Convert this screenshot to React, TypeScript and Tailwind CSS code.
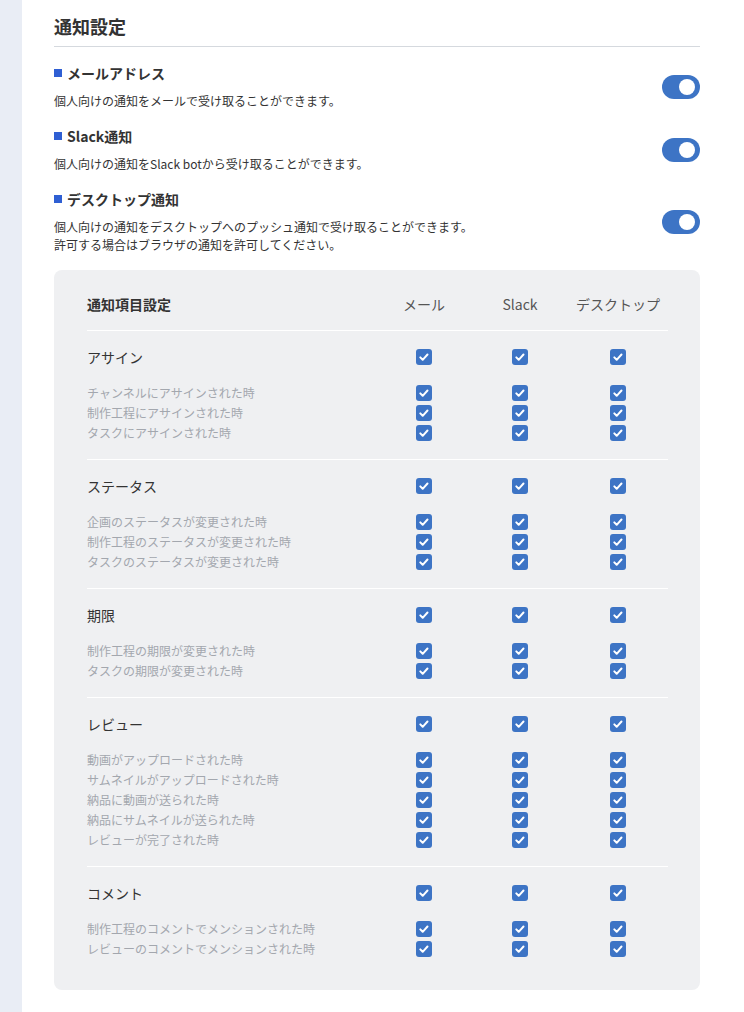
import React from "react";

function Check() {
  return (
    <span className="flex h-4 w-4 items-center justify-center rounded-[3px] bg-[#3d74c5]">
      <svg viewBox="0 0 16 16" className="h-4 w-4" fill="none">
        <path d="M4.3 8.4l2.4 2.4 4.8-5.3" stroke="white" strokeWidth="2" strokeLinecap="round" strokeLinejoin="round" />
      </svg>
    </span>
  );
}

function Toggle() {
  return (
    <div className="flex h-6 w-[38px] shrink-0 items-center justify-end rounded-full bg-[#3d74c5] pr-[5px]">
      <div className="h-4 w-4 rounded-full bg-white" />
    </div>
  );
}

const sections = [
  { title: "メールアドレス", desc: ["個人向けの通知をメールで受け取ることができます。"] },
  { title: "Slack通知", desc: ["個人向けの通知をSlack botから受け取ることができます。"] },
  {
    title: "デスクトップ通知",
    desc: [
      "個人向けの通知をデスクトップへのプッシュ通知で受け取ることができます。",
      "許可する場合はブラウザの通知を許可してください。",
    ],
  },
];

const groups = [
  { name: "アサイン", items: ["チャンネルにアサインされた時", "制作工程にアサインされた時", "タスクにアサインされた時"] },
  { name: "ステータス", items: ["企画のステータスが変更された時", "制作工程のステータスが変更された時", "タスクのステータスが変更された時"] },
  { name: "期限", items: ["制作工程の期限が変更された時", "タスクの期限が変更された時"] },
  {
    name: "レビュー",
    items: [
      "動画がアップロードされた時",
      "サムネイルがアップロードされた時",
      "納品に動画が送られた時",
      "納品にサムネイルが送られた時",
      "レビューが完了された時",
    ],
  },
  { name: "コメント", items: ["制作工程のコメントでメンションされた時", "レビューのコメントでメンションされた時"] },
];

function Checks() {
  return (
    <>
      <div className="flex justify-center"><Check /></div>
      <div className="flex justify-center"><Check /></div>
      <div className="flex justify-center"><Check /></div>
    </>
  );
}

export default function App() {
  return (
    <div className="flex min-h-screen font-['Noto_Sans_CJK_JP','Noto_Sans',sans-serif] text-[#333]">
      <div className="w-[22px] shrink-0 bg-[#e9edf5]" />
      <div className="flex-1 bg-white pl-[32px] pr-[44px] pt-[14px]">
        <h2 className="border-b border-[#d5d9de] pb-[8px] text-[18px] font-bold leading-[24px] text-[#333]">通知設定</h2>
        <div className="mt-[16px] flex flex-col gap-[16px]">
          {sections.map((s) => (
            <div key={s.title} className="flex items-center justify-between">
              <div>
                <div className="flex items-center gap-[5px] text-[14px] font-bold leading-[20px] text-[#333]">
                  <span className="h-2 w-2 bg-[#2f5fd3]" />
                  {s.title}
                </div>
                <div className="mt-[9px] text-[12px] leading-[18px] text-[#333]">
                  {s.desc.map((d) => (
                    <div key={d}>{d}</div>
                  ))}
                </div>
              </div>
              <Toggle />
            </div>
          ))}
        </div>
        <div className="mt-4 rounded-lg bg-[#eff0f2] pb-[15px] pl-[33px] pr-[32px] pt-[22px]">
          <div className="grid h-6 grid-cols-[1fr_96px_96px_100px] items-center">
            <div className="text-[14px] font-bold text-[#333]">通知項目設定</div>
            <div className="text-center text-[14px] text-[#555]">メール</div>
            <div className="text-center text-[14px] text-[#555]">Slack</div>
            <div className="text-center text-[14px] text-[#555]">デスクトップ</div>
          </div>
          <div className="mt-[14px]">
            {groups.map((g) => (
              <div key={g.name} className="border-t border-white pb-4 pt-[18px]">
                <div className="grid h-4 grid-cols-[1fr_96px_96px_100px] items-center">
                  <div className="text-[14px] leading-4 text-[#333]">{g.name}</div>
                  <Checks />
                </div>
                <div className="mt-[18px]">
                  {g.items.map((it) => (
                    <div key={it} className="grid h-5 grid-cols-[1fr_96px_96px_100px] items-center">
                      <div className="text-[12px] leading-5 text-[#a3a7ae]">{it}</div>
                      <Checks />
                    </div>
                  ))}
                </div>
              </div>
            ))}
          </div>
        </div>
        <div className="h-[22px]" />
      </div>
    </div>
  );
}
